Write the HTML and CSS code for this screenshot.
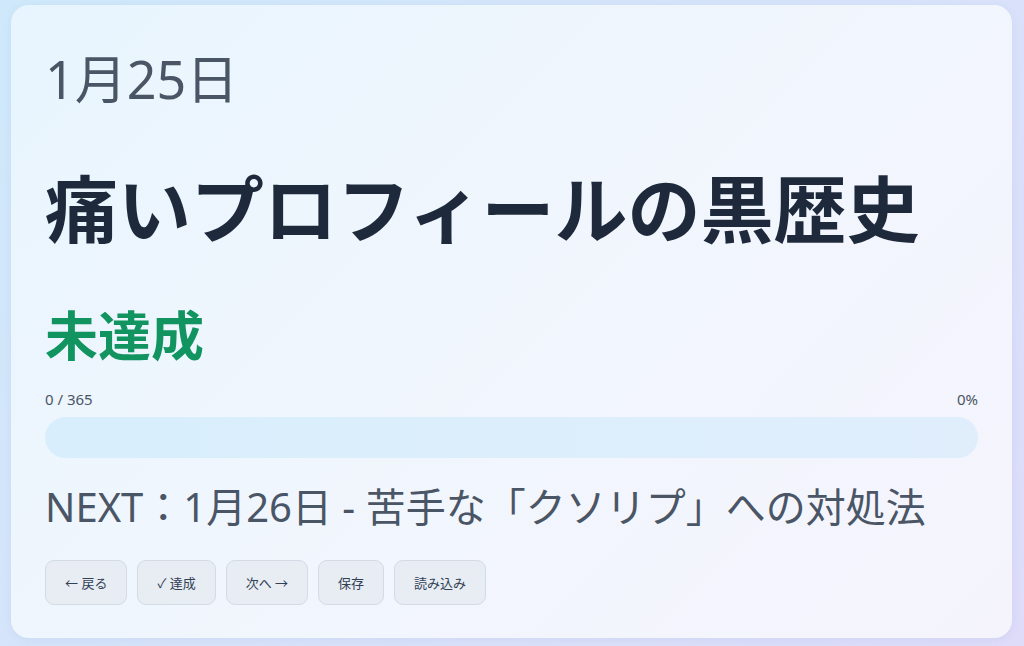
FILE: index.html
```html
<!DOCTYPE html>
<html lang="ja">
<head>
<meta charset="utf-8">
<link rel="stylesheet" href="styles.css">
</head>
<body>
<main class="card">
  <div class="date">1月25日</div>
  <h1 class="title">痛いプロフィールの黒歴史</h1>
  <div class="status">未達成</div>
  <div class="progress">
    <div class="progress-labels"><span>0 / 365</span><span>0%</span></div>
    <div class="bar"><div class="bar-fill" style="width:0%"></div></div>
  </div>
  <div class="next">NEXT：1月26日 - 苦手な「クソリプ」への対処法</div>
  <div class="actions">
    <button class="btn">← 戻る</button>
    <button class="btn">✓ 達成</button>
    <button class="btn">次へ →</button>
    <button class="btn">保存</button>
    <button class="btn">読み込み</button>
  </div>
</main>
</body>
</html>
```
FILE: styles.css
```css
* { box-sizing: border-box; }
html, body { height: 100%; }
body {
  margin: 0;
  padding-top: 5px;
  font-family: "Noto Sans", "Noto Sans CJK JP", sans-serif;
  background: linear-gradient(135deg, #cfe9fb 0%, #d9e2fa 60%, #dedcf9 100%);
  display: flex;
  align-items: flex-start;
  justify-content: center;
}
.card {
  width: 1001px;
  height: 633px;
  margin-left: -1px;
  border-radius: 18px;
  background: linear-gradient(135deg, #e8f5fe 0%, #f1f6fd 50%, #f5f4fd 100%);
  box-shadow: 0 2px 10px rgba(120, 150, 200, 0.12);
  padding: 43px 34px 0 34px;
  display: flex;
  flex-direction: column;
}
.date {
  font-size: 52px;
  line-height: 62px;
  color: #4a5565;
  margin: 0;
}
.title {
  font-size: 73px;
  line-height: 96px;
  font-weight: 700;
  color: #1e293b;
  margin: 51px 0 0 0;
}
.status {
  font-size: 53px;
  line-height: 70px;
  font-weight: 700;
  color: #129461;
  margin-top: 44px;
}
.progress { margin-top: 18px; }
.progress-labels {
  display: flex;
  justify-content: space-between;
  font-size: 15px;
  line-height: 20px;
  color: #4a5565;
}
.bar {
  margin-top: 8px;
  height: 41px;
  border-radius: 21px;
  background: linear-gradient(90deg, #d8eefc, #e0eefc);
  overflow: hidden;
}
.bar-fill { height: 100%; background: #129461; }
.next {
  margin-top: 22px;
  font-size: 40px;
  line-height: 54px;
  color: #4a5565;
}
.actions {
  margin-top: 26px;
  display: flex;
  gap: 10px;
}
.btn {
  font-family: inherit;
  font-size: 13px;
  color: #334155;
  height: 45px;
  padding: 0 19px;
  border: 1px solid #d3dbe4;
  border-radius: 9px;
  background: #e7edf3;
}
.btn-check { font-weight: 700; }
```
